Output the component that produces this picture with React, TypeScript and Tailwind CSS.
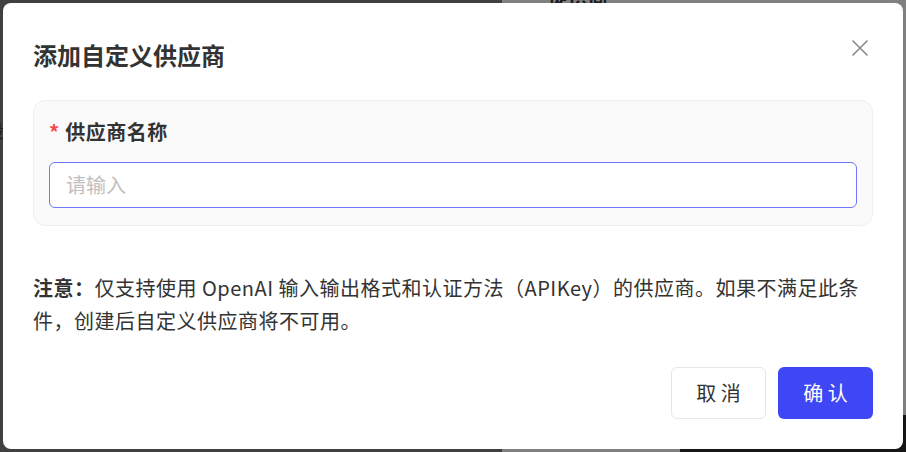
import React from "react";

const font = { fontFamily: '"Noto Sans CJK SC", "Noto Sans", sans-serif' };

export default function App() {
  return (
    <div className="relative h-[452px] w-[906px] overflow-hidden bg-[#404040]" style={font}>
      {/* backdrop page behind overlay */}
      <div className="absolute inset-y-0 right-0 left-[502px] flex flex-col bg-[#808080]">
        <div className="ml-[46px] mt-[-14px] text-[20px] font-bold leading-[20px] text-[#1a1a1a]">提供商</div>
        <div className="flex-1" />
        <div className="ml-auto h-[37px] w-[226px] bg-[#161616]" />
      </div>
      <div className="absolute left-0 top-[120px] text-[18px] leading-[20px] text-[#222]">
        <span className="ml-[-14px]">设</span>
      </div>

      {/* modal */}
      <div className="absolute inset-[3px] flex flex-col rounded-[8px] bg-white px-[30px] pb-[30px] pt-[32px]">
        <div className="flex h-[40px] items-center justify-between">
          <h2 className="text-[24px] font-bold leading-[40px] text-[#333]">添加自定义供应商</h2>
          <svg width="18" height="18" viewBox="0 0 18 18" className="mr-[4px] mt-[-14px]" fill="none" stroke="#8c8c8c" strokeWidth="1.6">
            <path d="M1.5 1.5L16.5 16.5M16.5 1.5L1.5 16.5" />
          </svg>
        </div>

        <div className="mt-[25px] rounded-[12px] border border-[#efefef] bg-[#fafafa] px-[15px] pb-[17px] pt-[15px]">
          <div className="flex h-[32px] items-center text-[20px] font-bold leading-[32px] text-[#333]">
            <span className="mr-[6px] text-[20px] text-[#f5484e]">*</span>
            <span className="tracking-[0.5px]">供应商名称</span>
          </div>
          <div className="mt-[14px] flex h-[46px] items-center rounded-[6px] border border-[#6b78ff] bg-white px-[16px] text-[20px] text-[#c0c0c0]">
            请输入
          </div>
        </div>

        <p className="mt-[45px] text-[20px] leading-[33px] tracking-[0.5px] text-[#333]">
          <span className="font-bold">注意：</span>仅支持使用 OpenAI 输入输出格式和认证方法（APIKey）的供应商。如果不满足此条
          <br />
          件，创建后自定义供应商将不可用。
        </p>

        <div className="mt-auto flex justify-end gap-[12px]">
          <button className="h-[52px] w-[95px] rounded-[6px] border border-[#e6e6e6] bg-white text-[20px] text-[#333]">
            取 消
          </button>
          <button className="h-[52px] w-[95px] rounded-[6px] bg-[#3f47f4] text-[20px] text-white">
            确 认
          </button>
        </div>
      </div>
    </div>
  );
}
